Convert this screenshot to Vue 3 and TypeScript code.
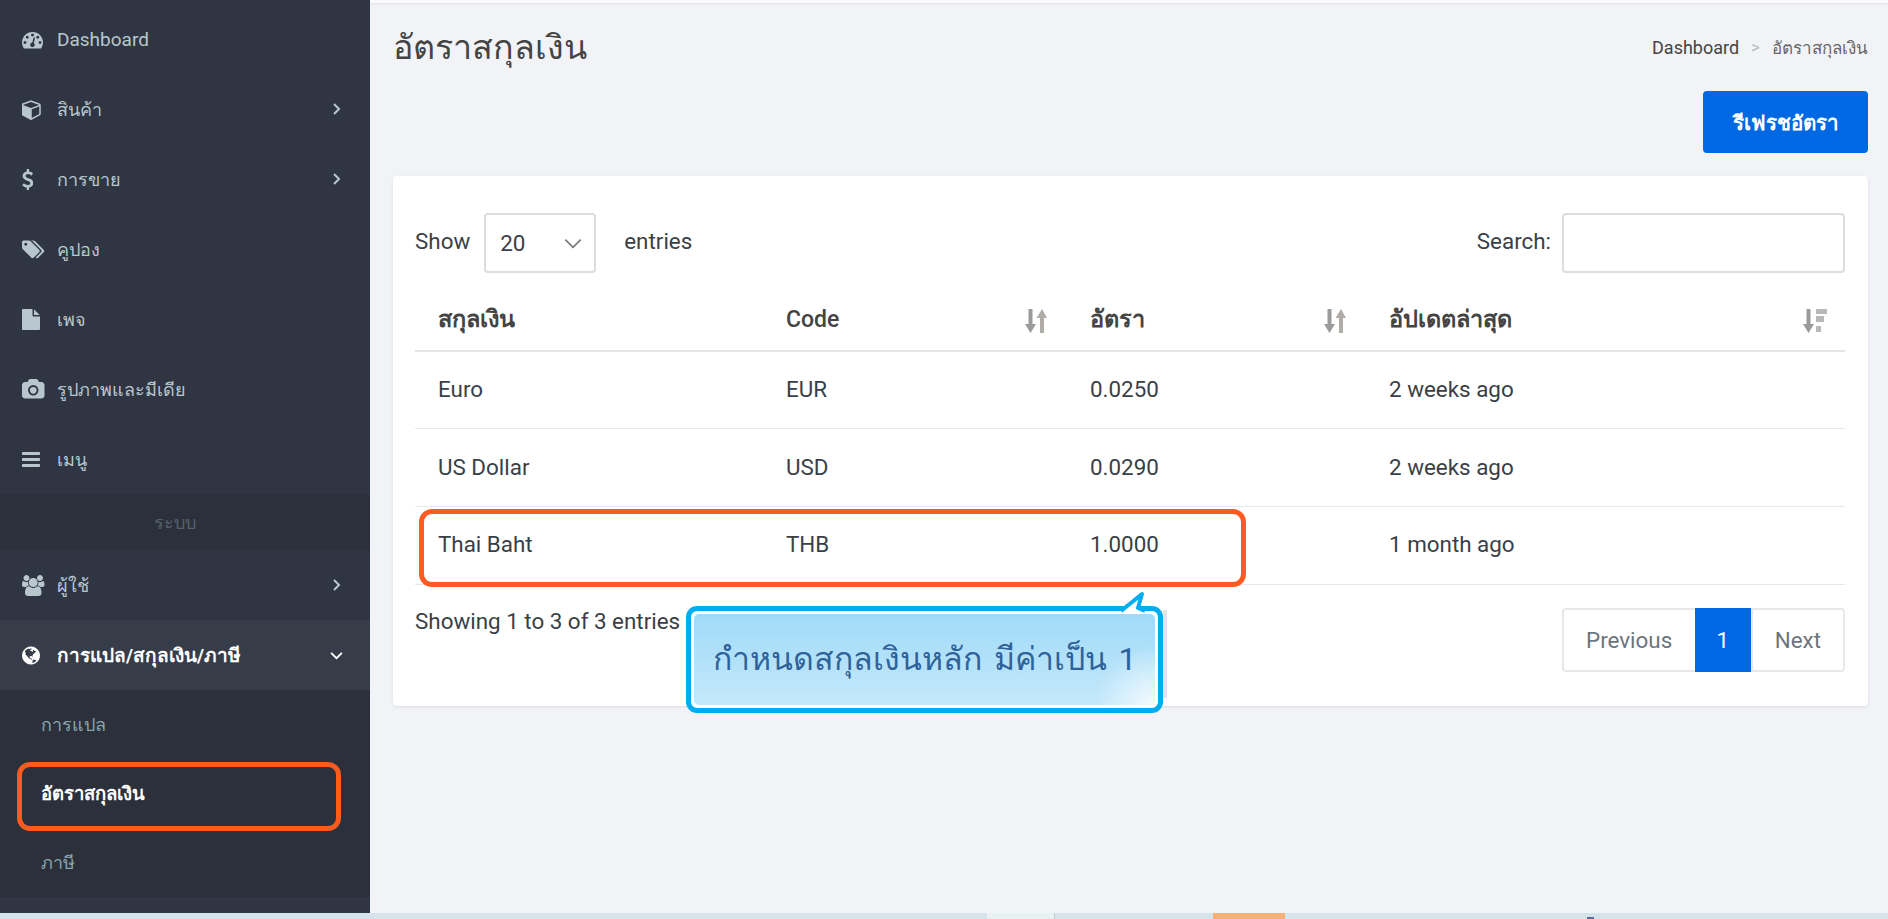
<script setup lang="ts">
interface NavItem {
  label: string
  icon: string
  box: string
  arrow?: boolean
  latin?: boolean
}

const icons = {
  dashboard:
    'M384 1152q0-53-37.5-90.5t-90.5-37.5-90.5 37.5-37.5 90.5 37.5 90.5 90.5 37.5 90.5-37.5 37.5-90.5zm192-448q0-53-37.5-90.5t-90.5-37.5-90.5 37.5-37.5 90.5 37.5 90.5 90.5 37.5 90.5-37.5 37.5-90.5zm428 481l101-382q6-26-7.5-48.5t-38.5-29.5-48 6.5-30 39.5l-101 382q-60 5-107 43.5t-63 98.5q-20 77 20 146t117 89 146-20 89-117q16-60-6-117t-72-91zm660-33q0-53-37.5-90.5t-90.5-37.5-90.5 37.5-37.5 90.5 37.5 90.5 90.5 37.5 90.5-37.5 37.5-90.5zm-640-640q0-53-37.5-90.5t-90.5-37.5-90.5 37.5-37.5 90.5 37.5 90.5 90.5 37.5 90.5-37.5 37.5-90.5zm448 192q0-53-37.5-90.5t-90.5-37.5-90.5 37.5-37.5 90.5 37.5 90.5 90.5 37.5 90.5-37.5 37.5-90.5zm320 448q0 261-141 483-19 29-54 29h-1402q-35 0-54-29-141-221-141-483 0-182 71-348t191-286 286-191 348-71 348 71 286 191 191 286 71 348z',
  cube:
    'M896 1629l640-349v-636l-640 233v752zm-64-864l698-254-698-254-698 254zm832-252v768q0 35-18 65t-50 47l-704 384q-28 16-61 16t-61-16l-704-384q-32-17-50-47t-18-65v-768q0-40 23-73t61-47l704-256q22-8 44-8t44 8l704 256q38 14 61 47t23 73z',
  dollar:
    'M1362 1185q0 153-99.5 263.5t-258.5 136.5v175q0 14-9 23t-23 9h-135q-13 0-22.5-9.5t-9.5-22.5v-175q-66-9-127.5-31t-101.5-44.5-74-48-46.5-37.5-17.5-18q-17-21-2-41l103-135q7-10 23-12 15-2 24 9l2 2q113 99 243 125 37 8 74 8 81 0 142.5-43t61.5-122q0-28-15-53t-33.5-42-58.5-37.5-66-32-80-32.5q-39-16-61.5-25t-61.5-26.5-62.5-31-56.5-35.5-53.5-42.5-43.5-49-35.5-58-21-66.5-8.5-78q0-138 98-242t255-134v-180q0-13 9.5-22.5t22.5-9.5h135q14 0 23 9t9 23v176q57 6 110.5 23t87 33.5 63.5 37.5 39 29 15 14q17 18 5 38l-81 146q-8 15-23 16-14 3-27-7-3-3-14.5-12t-39-26.5-58.5-32-74.5-26-85.5-11.5q-95 0-155 43t-60 111q0 26 8.5 48t29.5 41.5 39.5 33 56 31 60.5 27 70 27.5q53 20 81 31.5t76 35 75.5 42.5 62 50 53 63.5 31.5 76.5 13 94z',
  tags:
    'M448 448q0-53-37.5-90.5t-90.5-37.5-90.5 37.5-37.5 90.5 37.5 90.5 90.5 37.5 90.5-37.5 37.5-90.5zm1067 576q0 53-37 90l-491 492q-39 37-91 37-53 0-90-37l-715-716q-38-37-64.5-101t-26.5-117v-416q0-52 38-90t90-38h416q53 0 117 26.5t102 64.5l715 714q37 39 37 91zm384 0q0 53-37 90l-491 492q-39 37-91 37-36 0-59-14t-53-45l470-470q37-37 37-90 0-52-37-91l-715-714q-38-38-102-64.5t-117-26.5h224q53 0 117 26.5t102 64.5l715 714q37 39 37 91z',
  file:
    'M1152 512v-472q22 14 36 28l408 408q14 14 28 36h-472zm-128 32q0 40 28 68t68 28h544v1056q0 40-28 68t-68 28h-1344q-40 0-68-28t-28-68v-1600q0-40 28-68t68-28h800v544z',
  camera:
    'M960 672q119 0 203.5 84.5t84.5 203.5-84.5 203.5-203.5 84.5-203.5-84.5-84.5-203.5 84.5-203.5 203.5-84.5zm704-416q106 0 181 75t75 181v896q0 106-75 181t-181 75h-1408q-106 0-181-75t-75-181v-896q0-106 75-181t181-75h224l51-136q19-49 69.5-84.5t103.5-35.5h512q53 0 103.5 35.5t69.5 84.5l51 136h224zm-704 1152q185 0 316.5-131.5t131.5-316.5-131.5-316.5-316.5-131.5-316.5 131.5-131.5 316.5 131.5 316.5 316.5 131.5z',
  bars:
    'M1664 1344v128q0 26-19 45t-45 19h-1408q-26 0-45-19t-19-45v-128q0-26 19-45t45-19h1408q26 0 45 19t19 45zm0-512v128q0 26-19 45t-45 19h-1408q-26 0-45-19t-19-45v-128q0-26 19-45t45-19h1408q26 0 45 19t19 45zm0-512v128q0 26-19 45t-45 19h-1408q-26 0-45-19t-19-45v-128q0-26 19-45t45-19h1408q26 0 45 19t19 45z',
  users:
    'M593 896q-162 5-265 128h-134q-82 0-138-40.5t-56-118.5q0-353 124-353 6 0 43.5 21t97.5 42.5 119 21.5q67 0 133-23-5 37-5 66 0 139 81 256zm1071 637q0 120-73 189.5t-194 69.5h-874q-121 0-194-69.5t-73-189.5q0-53 3.5-103.5t14-109 26.5-108.5 43-97.5 62-81 85.5-53.5 111.5-20q10 0 43 21.5t73 48 107 48 135 21.5 135-21.5 107-48 73-48 43-21.5q61 0 111.5 20t85.5 53.5 62 81 43 97.5 26.5 108.5 14 109 3.5 103.5zm-1024-1277q0 106-75 181t-181 75-181-75-75-181 75-181 181-75 181 75 75 181zm704 384q0 159-112.5 271.5t-271.5 112.5-271.5-112.5-112.5-271.5 112.5-271.5 271.5-112.5 271.5 112.5 112.5 271.5zm576 225q0 78-56 118.5t-138 40.5h-134q-103-123-265-128 81-117 81-256 0-29-5-66 66 23 133 23 59 0 119-21.5t97.5-42.5 43.5-21q124 0 124 353zm-128-609q0 106-75 181t-181 75-181-75-75-181 75-181 181-75 181 75 75 181z',
  globe:
    'M896 128q209 0 385.5 103t279.5 279.5 103 385.5-103 385.5-279.5 279.5-385.5 103-385.5-103-279.5-279.5-103-385.5 103-385.5 279.5-279.5 385.5-103zm274 521q-2 1-9.5 9.5t-13.5 9.5q2 0 4.5-5t5-11 3.5-7q6-7 22-15 14-6 52-12 34-8 51 11-2-2 9.5-13t14.5-12q3-2 15-4.5t15-7.5l2-22q-12 1-17.5-7t-6.5-21q0 2-6 8 0-7-4.5-8t-11.5 1-9 1q-10-3-15-7.5t-8-16.5-4-15q-2-5-9.5-11t-9.5-10q-1-2-2.5-5.5t-3-6.5-4-5.5-5.5-2.5-7 5-7.5 10-4.5 5q-3-2-6-1.5t-4.5 1-4.5 3-5 3.5q-3 2-8.5 3t-8.5 2q15-5-1-11-10-4-16-3 9-4 7.5-12t-8.5-14h5q-1-4-8.5-8.5t-17.5-8.5-13-6q-8-5-34-9.5t-33-.5q-5 6-4.5 10.5t4 14 3.5 12.5q1 6-5.5 13t-6.5 12q0 7 14 15.5t10 21.5q-3 8-16 16t-16 12q-5 8-1.5 18.5t10.5 16.5q2 2 1.5 4t-3.5 4.5-5.5 4-6.5 3.5l-3 2q-11 5-20.5-6t-13.5-26q-7-25-16-30-23-8-29 1-5-13-41-26-25-9-58-4 6-1 0-15-7-15-19-12 3-6 4-17.5t1-13.5q3-13 12-23 1-1 7-8.5t9.5-13.5.5-6q35 4 50-11 5-5 11.5-17t10.5-17q9-6 14-5.5t14.5 5.5 14.5 5q14 1 15.5-11t-7.5-20q12 1 3-17-4-7-8-9-12-4-27 5-8 4 2 8-1-1-9.5 10.5t-16.5 17.5-16-5q-1-1-5.5-13.5t-9.5-13.5q-8 0-16 15 3-8-11-15t-24-8q19-12-8-27-7-4-20.5-5t-19.5 4q-5 7-5.5 11.5t5 8 10.5 5.5 11.5 4 8.5 3q14 10 8 14-2 1-8.5 3.5t-11.5 4.5-6 4q-3 4 0 14t-2 14q-5-5-9-17.5t-7-16.5q7 9-25 6l-10-1q-4 0-16 2t-20.5 1-13.5-8q-4-8 0-20 1-4 4-2-4-3-11-9.5t-10-8.5q-46 15-94 41 6 1 12-1 5-2 13-6.5t10-5.5q34-14 42-7l5-5q14 16 20 25-7-4-30-1-20 6-22 12 7 12 5 18-4-3-11.5-10t-14.5-11-15-5q-16 0-22 1-146 80-235 222 7 7 12 8 4 1 5 9t2.5 11 11.5-3q9 8 3 19 1-1 44 27 19 17 21 21 3 11-10 18-1-2-9-9t-9-4q-3 5 .5 18.5t10.5 12.5q-7 0-9.5 16t-2.5 35.5-1 23.5l2 1q-3 12 5.5 34.5t21.5 19.5q-13 3 20 43 6 8 8 9 3 2 12 7.5t15 10 10 10.5q4 5 10 22.5t14 23.5q-2 6 9.5 20t10.5 23q-1 0-2.5 1t-2.5 1q3 7 15.5 14t15.5 13q1 3 2 10t3 11 8 2q2-20-24-62-15-25-17-29-3-5-5.5-15.5t-4.5-14.5q2 0 6 1.5t8.5 3.5 7.5 4 2 3q-3 7 2 17.5t12 18.5 17 19 12 13q6 6 14 19.5t0 13.5q9 0 20 10.5t17 19.5q5 8 8 26t5 24q2 7 8.5 13.5t12.5 9.5l16 8 13 7q5 2 18.5 10.5t21.5 11.5q10 4 16 4t14.5-2.5 13.5-3.5q15-2 29 15t21 21q36 19 55 11-2 1 .5 7.5t8 15.5 9 14.5 5.5 8.5q5 6 18 15t18 15q6-4 7-9-3 8 7 20t18 10q14-3 14-32-31 15-49-18 0-1-2.5-5.5t-4-8.5-2.5-8.5 0-7.5 5-3q9 0 10-3.5t-2-12.5-4-13q-1-8-11-20t-12-15q-5 9-16 8t-16-9q0 1-1.5 5.5t-1.5 6.5q-13 0-15-1 1-3 2.5-17.5t3.5-22.5q1-4 5.5-12t7.5-14.5 4-12.5-4.5-9.5-17.5-2.5q-19 1-26 20-1 3-3 10.5t-5 11.5-9 7q-7 3-24 2t-24-5q-13-8-22.5-29t-9.5-37q0-10 2.5-26.5t3-25-5.5-24.5q3-2 9-9.5t10-10.5q2-1 4.5-1.5t4.5 0 4-1.5 3-6q-1-1-4-3-3-3-4-3 7 3 28.5-1.5t27.5 1.5q15 11 22-2 0-1-2.5-9.5t-.5-13.5q5 27 29 9 3 3 15.5 5t17.5 5q3 2 7 5.5t5.5 4.5 5-.5 8.5-6.5q10 14 12 24 11 40 19 44 7 3 11 2t4.5-9.5 0-14-1.5-12.5l-1-8v-18l-1-8q-15-3-18.5-12t1.5-18.5 15-18.5q1-1 8-3.5t15.5-6.5 12.5-8q21-19 15-35 7 0 11-9-1 0-5-3t-7.5-5-4.5-2q9-5 2-16 5-3 7.5-11t7.5-10q9 12 21 2 8-8 1-16 5-7 20.5-10.5t18.5-9.5q7 2 8-2t1-12 3-12q4-5 15-9t13-5l17-11q3-4 0-4 18 2 31-11 10-11-6-20 3-6-3-9.5t-15-5.5q3-1 11.5-.5t10.5-1.5q15-10-7-16-17-5-43 12zm-163 877q206-36 351-189-3-3-12.5-4.5t-12.5-3.5q-18-7-24-8 1-7-2.5-13t-8-9-12.5-8-11-7q-2-2-7-6t-7-5.5-7.5-4.5-8.5-2-10 1l-3 1q-3 1-5.5 2.5t-5.5 3-4 3 0 2.5q-21-17-36-22-5-1-11-5.5t-10.5-7-10-1.5-11.5 7q-5 5-6 15t-2 13q-7-5 0-17.5t2-18.5q-3-6-10.5-4.5t-12 4.5-11.5 8.5-9 6.5-8.5 5.5-8.5 7.5q-3 4-6 12t-5 11q-2-4-11.5-6.5t-9.5-5.5q2 10 4 35t5 38q7 31-12 48-27 25-29 40-4 22 12 26 0 7-8 20.5t-7 21.5q0 6 2 16z',
}

const mainNav: NavItem[] = [
  { label: 'Dashboard', icon: icons.dashboard, box: '0 0 1792 1792', latin: true },
  { label: 'สินค้า', icon: icons.cube, box: '64 0 1664 1792', arrow: true },
  { label: 'การขาย', icon: icons.dollar, box: '400 0 962 1792', arrow: true },
  { label: 'คูปอง', icon: icons.tags, box: '0 0 1920 1792' },
  { label: 'เพจ', icon: icons.file, box: '128 0 1536 1792' },
  { label: 'รูปภาพและมีเดีย', icon: icons.camera, box: '0 0 1920 1792' },
  { label: 'เมนู', icon: icons.bars, box: '128 0 1536 1792' },
]

const rates = [
  { name: 'Euro', code: 'EUR', rate: '0.0250', updated: '2 weeks ago' },
  { name: 'US Dollar', code: 'USD', rate: '0.0290', updated: '2 weeks ago' },
  { name: 'Thai Baht', code: 'THB', rate: '1.0000', updated: '1 month ago' },
]
</script>

<template>
  <div class="page">
    <div class="body">
      <aside class="sidebar">
        <a v-for="item in mainNav" :key="item.label" class="nav-item" :class="{ latin: item.latin }">
          <div class="icon-slot">
            <svg class="nav-icon" :viewBox="item.box" fill="currentColor"><path :d="item.icon" /></svg>
          </div>
          <span>{{ item.label }}</span>
          <svg v-if="item.arrow" class="chev" viewBox="0 0 10 14" fill="none" stroke="currentColor" stroke-width="2"><path d="M2 2l5 5-5 5" /></svg>
        </a>
        <div class="nav-section">ระบบ</div>
        <a class="nav-item">
          <div class="icon-slot">
            <svg class="nav-icon" viewBox="0 0 1920 1792" fill="currentColor"><path :d="icons.users" /></svg>
          </div>
          <span>ผู้ใช้</span>
          <svg class="chev" viewBox="0 0 10 14" fill="none" stroke="currentColor" stroke-width="2"><path d="M2 2l5 5-5 5" /></svg>
        </a>
        <a class="nav-item open">
          <div class="icon-slot">
            <svg class="nav-icon" viewBox="128 0 1536 1792" fill="currentColor"><path :d="icons.globe" fill-rule="evenodd" /></svg>
          </div>
          <span>การแปล/สกุลเงิน/ภาษี</span>
          <svg class="chev down" viewBox="0 0 14 10" fill="none" stroke="currentColor" stroke-width="2"><path d="M1 2l6 6 6-6" /></svg>
        </a>
        <div class="subnav">
          <a class="sub-item">การแปล</a>
          <a class="sub-item current">อัตราสกุลเงิน</a>
          <a class="sub-item">ภาษี</a>
        </div>
        <div class="mark mark-nav"></div>
      </aside>

      <main class="content">
        <div class="top-edge"></div>
        <div class="heading">
          <h1>อัตราสกุลเงิน</h1>
          <div class="crumbs">
            <span class="crumb-home">Dashboard</span>
            <span class="sep">&gt;</span>
            <span class="crumb-now">อัตราสกุลเงิน</span>
          </div>
        </div>
        <div class="actions">
          <button type="button" class="refresh">รีเฟรชอัตรา</button>
        </div>

        <section class="card">
          <div class="controls">
            <div class="length">
              <span class="ctl-text">Show</span>
              <div class="select">
                <span>20</span>
                <svg viewBox="0 0 16 10" fill="none" stroke="#777" stroke-width="1.5"><path d="M1 1.500l7 7 7-7" /></svg>
              </div>
              <span class="ctl-text entries">entries</span>
            </div>
            <label class="search">
              <span class="ctl-text">Search:</span>
              <input type="text" />
            </label>
          </div>

          <table class="rates">
            <colgroup>
              <col style="width: 348px" />
              <col style="width: 304px" />
              <col style="width: 299px" />
              <col />
            </colgroup>
            <thead>
              <tr>
                <th class="thai">สกุลเงิน</th>
                <th class="sortable">
                  Code
                  <svg class="sort" viewBox="0 0 22 24"><path d="M3.500 0h4v15H11l-5.500 9L0 15h3.500z" fill="#9a9a9a" /><path d="M15 24h4V9h3l-5-9-5.500 9H15z" fill="#b0aca8" /></svg>
                </th>
                <th class="sortable thai">
                  อัตรา
                  <svg class="sort" viewBox="0 0 22 24"><path d="M3.500 0h4v15H11l-5.500 9L0 15h3.500z" fill="#9a9a9a" /><path d="M15 24h4V9h3l-5-9-5.500 9H15z" fill="#b0aca8" /></svg>
                </th>
                <th class="sortable thai last">
                  อัปเดตล่าสุด
                  <svg class="sort" viewBox="0 0 24 24"><path d="M3.500 0h4v15H11l-5.500 9L0 15h3.500z" fill="#9a9a9a" /><path d="M13 0h11v5H13zM13 7h8v6h-8zM13 17h5v6h-5z" fill="#b8b8b8" /></svg>
                </th>
              </tr>
            </thead>
            <tbody>
              <tr v-for="row in rates" :key="row.code">
                <td>{{ row.name }}</td>
                <td>{{ row.code }}</td>
                <td>{{ row.rate }}</td>
                <td>{{ row.updated }}</td>
              </tr>
            </tbody>
          </table>

          <div class="table-foot">
            <div class="info">Showing 1 to 3 of 3 entries</div>
            <div class="pager">
              <a>Previous</a>
              <a class="active">1</a>
              <a>Next</a>
            </div>
          </div>
        </section>

        <!-- annotations drawn on top of the screenshot -->
        <div class="mark mark-row"></div>
        <div class="callout">
          <svg class="callout-tail" viewBox="0 0 30 22"><path d="M3 20L24 3 20 17l7 3" fill="#fff" stroke="#00adef" stroke-width="4" stroke-linejoin="round" /></svg>
          <div class="callout-inner">กำหนดสกุลเงินหลัก มีค่าเป็น 1</div>
        </div>
      </main>
    </div>

    <div class="strip">
      <i class="s1"></i><i class="s2"></i><i class="s3"></i><i class="s4"></i><i class="s5"></i><i class="s6"></i>
    </div>
  </div>
</template>

<style>
html,
body {
  margin: 0;
  overflow: hidden;
}
</style>

<style scoped>
.page {
  display: flex;
  flex-direction: column;
  height: 919px;
  font-family: Roboto, 'Noto Sans', sans-serif;
  font-size: 22.4px;
  color: #3a3f47;
  background: #f1f3f7;
}

.body {
  display: flex;
  flex: 1;
  min-height: 0;
}

.sidebar {
  position: relative;
  width: 370px;
  flex-shrink: 0;
  background: #2f3542;
  color: #b8c7ce;
  font-size: 18px;
  padding-top: 4px;
}

.nav-item {
  display: flex;
  align-items: center;
  height: 70px;
  padding: 0 28px 0 22px;
}

.nav-item.latin {
  font-size: 19px;
}

.nav-item span {
  flex: 1;
  white-space: nowrap;
}

.icon-slot {
  width: 35px;
  flex-shrink: 0;
}

.nav-icon {
  display: block;
  height: 21px;
}

.chev {
  width: 10px;
  height: 14px;
}

.chev.down {
  width: 13px;
  height: 9px;
  margin-right: -1px;
}

.nav-item.open {
  background: #373c49;
  color: #fff;
  font-size: 19px;
  font-weight: 700;
}

.nav-section {
  height: 56px;
  padding-right: 20px;
  display: flex;
  align-items: center;
  justify-content: center;
  background: #2b303b;
  color: #55626b;
  font-size: 18px;
}

.subnav {
  height: 207px;
  background: #2b303b;
}

.sub-item {
  display: flex;
  align-items: center;
  height: 69px;
  padding-left: 41px;
  color: #8aa4af;
}

.sub-item.current {
  color: #fff;
  font-size: 18.500px;
  font-weight: 700;
}

.mark {
  position: absolute;
  border: 5px solid #ff5a1f;
  border-radius: 13px;
  box-sizing: border-box;
}

.mark-nav {
  left: 17px;
  top: 762px;
  width: 324px;
  height: 69px;
}

.content {
  position: relative;
  flex: 1;
  min-width: 0;
  padding: 0 20px 0 23px;
}

.top-edge {
  height: 3px;
  margin: 0 -20px 0 -23px;
  background: #fbfbfc;
  box-shadow: 0 1px 2px rgba(0, 0, 0, 0.08);
}

.heading {
  display: flex;
  align-items: center;
  justify-content: space-between;
  height: 88px;
}

h1 {
  margin: 0;
  font-size: 34px;
  font-weight: 400;
  color: #444;
}

.crumbs {
  display: flex;
  align-items: center;
  gap: 12px;
  font-size: 17px;
  color: #444;
}

.crumb-home {
  font-size: 18px;
}

.sep {
  color: #bbb;
}

.crumb-now {
  color: #666;
}

.actions {
  display: flex;
  justify-content: flex-end;
}

.refresh {
  width: 165px;
  height: 62px;
  padding: 0;
  border: none;
  border-radius: 4px;
  background: #0068e3;
  color: #fff;
  font-family: inherit;
  font-size: 20.500px;
  font-weight: 700;
}

.card {
  margin-top: 23px;
  height: 530px;
  padding: 37px 23px 0 22px;
  box-sizing: border-box;
  background: #fff;
  border-radius: 4px;
  box-shadow: 0 1px 3px rgba(0, 0, 0, 0.1);
}

.controls {
  display: flex;
  justify-content: space-between;
  align-items: center;
  height: 60px;
}

.length,
.search {
  display: flex;
  align-items: center;
}

.ctl-text {
  margin-top: -4px;
}

.select {
  display: flex;
  align-items: center;
  justify-content: space-between;
  width: 112px;
  height: 60px;
  margin-left: 14px;
  padding: 0 12px 0 14px;
  box-sizing: border-box;
  border: 2px solid #ddd;
  border-radius: 4px;
}

.select svg {
  width: 18px;
  height: 11px;
}

.entries {
  margin-left: 28px;
}

.search input {
  width: 283px;
  height: 60px;
  margin-left: 11px;
  box-sizing: border-box;
  border: 2px solid #ddd;
  border-radius: 4px;
  background: #fff;
}

.rates {
  width: 100%;
  margin-top: 16px;
  border-collapse: collapse;
  table-layout: fixed;
}

.rates th {
  position: relative;
  height: 62px;
  padding: 0 23px;
  box-sizing: border-box;
  text-align: left;
  font-size: 23px;
  font-weight: 500;
  color: #444;
  border-bottom: 2px solid #e4e5e7;
}

.rates th.thai {
  padding-bottom: 2px;
  font-size: 23.500px;
  font-weight: 700;
}

.sort {
  position: absolute;
  right: 20px;
  top: 20px;
  width: 22px;
  height: 24px;
}

.last .sort {
  right: 18px;
  width: 24px;
}

.rates td {
  height: 77.700px;
  padding: 0 23px 2px;
  box-sizing: border-box;
  border-bottom: 1px solid #e7e8ea;
}

.table-foot {
  display: flex;
  justify-content: space-between;
  align-items: flex-start;
  margin-top: 23px;
}

.pager {
  display: flex;
  height: 64px;
  box-sizing: border-box;
  border: 2px solid #e8e8e8;
  border-radius: 4px;
  color: #6c757d;
}

.pager a {
  display: flex;
  align-items: center;
  padding: 0 22px;
}

.pager a:first-child {
  padding: 0 22.500px;
}

.pager a.active {
  width: 58px;
  padding: 0;
  justify-content: center;
  margin: -2px 0;
  border-right: 2px solid #e8e8e8;
  background: #0068e3;
  color: #fff;
  box-sizing: border-box;
}

.mark-row {
  left: 49px;
  top: 509px;
  width: 827px;
  height: 78px;
}

.callout {
  position: absolute;
  left: 316px;
  top: 606px;
  width: 477px;
  height: 107px;
  box-sizing: border-box;
  padding: 3px;
  border: 5px solid #00adef;
  border-radius: 11px;
  background: #fff;
}

.callout::after {
  content: '';
  position: absolute;
  right: -9px;
  top: -1px;
  width: 4px;
  height: 88px;
  background: #e4e4e4;
}

.callout-tail {
  position: absolute;
  right: 10px;
  top: -20px;
  width: 30px;
  height: 22px;
  overflow: visible;
}

.callout-inner {
  display: flex;
  align-items: center;
  justify-content: center;
  height: 100%;
  padding-bottom: 2px;
  box-sizing: border-box;
  border-radius: 5px;
  background:
    radial-gradient(circle at 100% 100%, rgba(255, 255, 255, 0.8), transparent 60px),
    linear-gradient(180deg, #a0daf8 0%, #b4e2f9 55%, #c4e8fb 100%);
  color: #2f6299;
  font-size: 32px;
  word-spacing: 4px;
}

.strip {
  position: relative;
  display: flex;
  height: 6px;
  flex-shrink: 0;
  background: #d5e3ea;
}

.strip i {
  display: block;
}

.s1 {
  width: 987px;
}

.s2 {
  width: 68px;
  background: #e8f1f2;
  border-right: 1px solid #c4cdd0;
  box-sizing: border-box;
}

.s3 {
  width: 158px;
}

.s4 {
  width: 72px;
  background: #f4b27a;
}

.s5 {
  flex: 1;
}

.s6 {
  position: absolute;
  left: 1587px;
  bottom: 0;
  width: 7px;
  height: 2px;
  background: #5a6b9a;
}
</style>
